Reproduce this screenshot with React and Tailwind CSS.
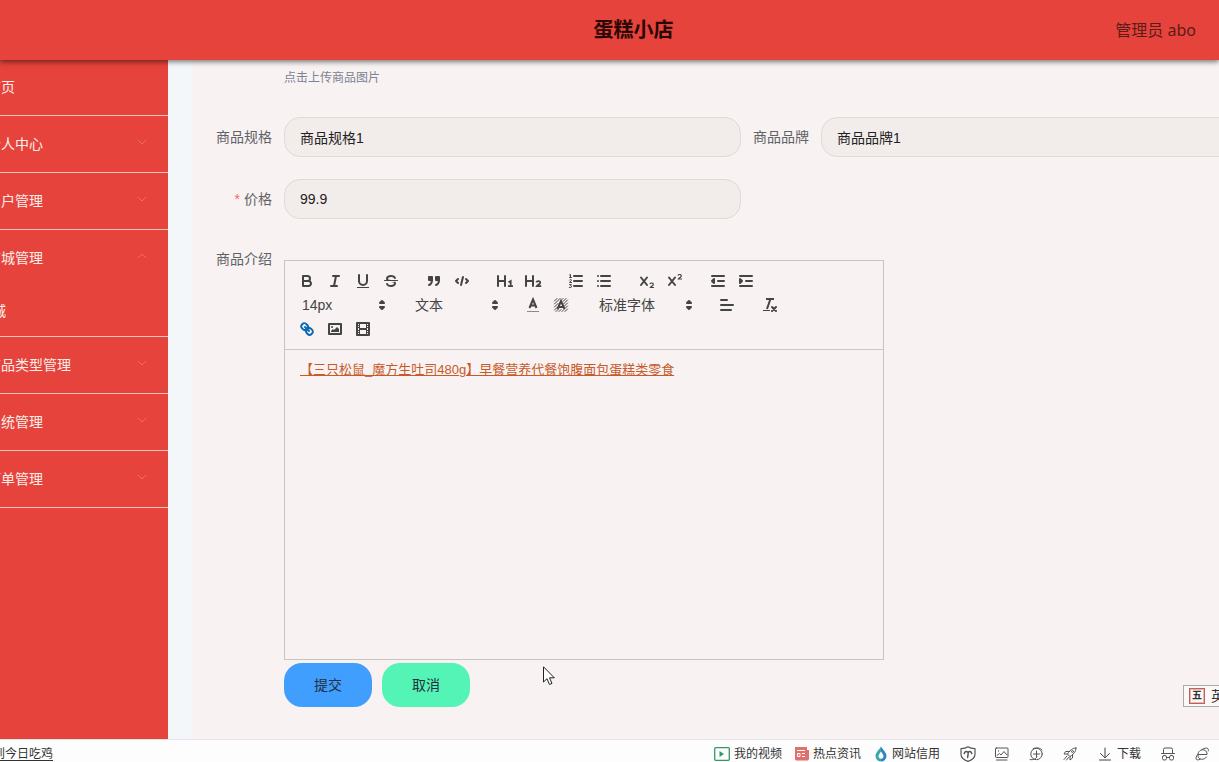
import React from "react";

const cjk = "font-['Liberation_Sans','Noto_Sans_CJK_SC',sans-serif]";

const L = (d) => (
  <path d={d} fill="none" stroke="#444" strokeWidth="2" strokeLinecap="round" strokeLinejoin="round" />
);

function ToolButton({ label, children }) {
  return (
    <button type="button" aria-label={label} className="flex h-6 w-7 items-center justify-center">
      <svg viewBox="0 0 18 18" className="size-[18px]">{children}</svg>
    </button>
  );
}

function Group({ children }) {
  return <span className="mr-[15px] flex">{children}</span>;
}

function Picker({ label, value, width }) {
  return (
    <Group>
      <span className={"relative flex h-6 items-center " + width}>
        <select aria-label={label} className="h-6 w-full appearance-none bg-transparent pl-[9px] text-sm leading-6 text-[#444] outline-none">
          <option>{value}</option>
        </select>
        <svg viewBox="0 0 18 18" className="pointer-events-none absolute right-0 size-[18px]">
          <polygon points="7 11 9 13 11 11 7 11" fill="#444" stroke="#444" strokeWidth="2" strokeLinejoin="round" />
          <polygon points="7 7 9 5 11 7 7 7" fill="#444" stroke="#444" strokeWidth="2" strokeLinejoin="round" />
        </svg>
      </span>
    </Group>
  );
}

function Toolbar() {
  return (
    <div className="flex flex-wrap border-b border-[#ccc8c8] p-2">
      <Group>
        <ToolButton label="粗体">
          {L("M5,4H9.5A2.5,2.5,0,0,1,12,6.5v0A2.5,2.5,0,0,1,9.5,9H5A0,0,0,0,1,5,9V4A0,0,0,0,1,5,4Z")}
          {L("M5,9h5.5A2.5,2.5,0,0,1,13,11.5v0A2.5,2.5,0,0,1,10.5,14H5a0,0,0,0,1,0,0V9A0,0,0,0,1,5,9Z")}
        </ToolButton>
        <ToolButton label="斜体">{L("M7,4H13M5,14H11M8,14L10,4")}</ToolButton>
        <ToolButton label="下划线">
          {L("M5,3V9a4,4,0,0,0,4,4H9a4,4,0,0,0,4-4V3")}
          <rect x="3" y="15" width="12" height="1" fill="#444" />
        </ToolButton>
        <ToolButton label="删除线">
          <path d="M15.5,8.5H2.5" stroke="#444" strokeLinecap="round" />
          <path fill="#444" d="M9.007,8C6.542,7.791,6,7.519,6,6.5,6,5.792,7.283,5,9,5c1.571,0,2.765.679,2.969,1.309a1,1,0,0,0,1.9-.617C13.356,4.106,11.354,3,9,3,6.2,3,4,4.538,4,6.5a3.2,3.2,0,0,0,.5,1.843Z" />
          <path fill="#444" d="M8.984,10C11.457,10.208,12,10.479,12,11.5c0,.708-1.283,1.5-3,1.5-1.571,0-2.765-.679-2.969-1.309a1,1,0,1,0-1.9.617C4.644,13.894,6.646,15,9,15c2.8,0,5-1.538,5-3.5a3.2,3.2,0,0,0-.5-1.843Z" />
        </ToolButton>
      </Group>
      <Group>
        <ToolButton label="引用">
          <g fill="#444" stroke="#444" strokeWidth="2" strokeLinejoin="round">
            <rect x="4" y="5" width="3" height="3" />
            <rect x="11" y="5" width="3" height="3" />
            <path d="M7,8c0,4.031-3,5-3,5" fill="none" strokeLinecap="round" />
            <path d="M14,8c0,4.031-3,5-3,5" fill="none" strokeLinecap="round" />
          </g>
        </ToolButton>
        <ToolButton label="代码">{L("M5,7L3,9L5,11M13,7L15,9L13,11M10,5L8,13")}</ToolButton>
      </Group>
      <Group>
        <ToolButton label="标题一">
          {L("M2,4V14M9,4V14M9,9H2")}
          <path d="M12,14.2H17M14.7,14.2V9L12.5,10.2" fill="none" stroke="#444" strokeWidth="1.8" />
        </ToolButton>
        <ToolButton label="标题二">
          {L("M2,4V14M9,4V14M9,9H2")}
          <path d="M12.3,10.3C13,8.6,16.6,8.8,16.2,10.9C16,12.3,13.6,13,12.8,14.2H17.2" fill="none" stroke="#444" strokeWidth="1.8" />
        </ToolButton>
      </Group>
      <Group>
        <ToolButton label="有序列表">
          {L("M7,4H15M7,9H15M7,14H15")}
          <path d="M2.5,5.5H4.5M3.5,5.5V2.5L2.5,3M2.5,8C3,7,4.7,7.4,4.4,8.4L2.5,10.5H4.6M2.5,12.6H4.4L3.5,13.8C5,13.8,4.8,15.6,3.5,15.5H2.4" fill="none" stroke="#444" strokeLinecap="round" />
        </ToolButton>
        <ToolButton label="无序列表">{L("M6,4H15M6,9H15M6,14H15M3,4H3M3,9H3M3,14H3")}</ToolButton>
      </Group>
      <Group>
        <ToolButton label="下标">
          {L("M3,5.500L9,13M9,5.500L3,13")}
          <path d="M12,12C12.400,10.500,15.700,10.700,15.200,12.600C15,13.700,13,14.400,12.400,15.500H16" fill="none" stroke="#444" strokeWidth="1.200" />
        </ToolButton>
        <ToolButton label="上标">
          {L("M3,5.500L9,13M9,5.500L3,13")}
          <path d="M12,3.500C12.400,2,15.700,2.200,15.200,4.100C15,5.200,13,5.900,12.400,7H16" fill="none" stroke="#444" strokeWidth="1.200" />
        </ToolButton>
      </Group>
      <Group>
        <ToolButton label="减少缩进">
          {L("M3,14H15M3,4H15M9,9H15")}
          <polygon points="5 7 5 11 3 9" fill="#444" stroke="#444" strokeWidth="2" strokeLinejoin="round" />
        </ToolButton>
        <ToolButton label="增加缩进">
          {L("M3,14H15M3,4H15M9,9H15")}
          <polygon points="3 7 3 11 5 9" fill="#444" stroke="#444" strokeWidth="2" strokeLinejoin="round" />
        </ToolButton>
      </Group>
      <Picker label="字号" value="14px" width="w-[98px]" />
      <Picker label="标题" value="文本" width="w-[98px]" />
      <Group>
        <ToolButton label="文字颜色">
          <path d="M3,15.5H15" stroke="#444" strokeOpacity=".6" />
          <path d="M5.5,12L9,3.500L12.5,12M11.6,9.500H6.4" fill="none" stroke="#444" strokeWidth="2" />
        </ToolButton>
        <ToolButton label="背景颜色">
          <path d="M2.5,5L5,2.5M2.5,8L8,2.5M2.5,11L6,7.5M2.5,14L5,11.5M4,15.5L6.5,13M7,15.5L9,13.5M10,15.5L12,13.5M13,15.5L15.5,13M13,12.5L15.5,10M12.5,10L15.5,7M11.5,8L15.5,4M11,5.5L14,2.5M10,3.5L11,2.5" stroke="#444" strokeLinecap="round" />
          <path d="M5.5,13L9,5L12.5,13M11.6,11H6.4" fill="none" stroke="#444" strokeWidth="2" />
        </ToolButton>
      </Group>
      <Picker label="字体" value="标准字体" width="w-[108px]" />
      <Group>
        <ToolButton label="对齐方式">{L("M3,9H15M3,14H13M3,4H9")}</ToolButton>
      </Group>
      <Group>
        <ToolButton label="清除格式">
          <path d="M5,3H13M6,13L9.4,3" stroke="#444" strokeWidth="2" fill="none" />
          <path d="M11,11L15,15M15,11L11,15" stroke="#444" strokeWidth="2" strokeLinecap="round" />
          <rect x="2" y="14" width="7" height="1" fill="#444" />
        </ToolButton>
      </Group>
      <Group>
        <ToolButton label="链接">
          <g fill="none" stroke="#0a68b4" strokeWidth="2" strokeLinecap="round" strokeLinejoin="round">
            <path d="M7,7L11,11" />
            <path d="M8.9,4.577a3.476,3.476,0,0,1,.36,4.679A3.476,3.476,0,0,1,4.577,8.9C3.185,7.5,2.035,6.4,4.217,4.217S7.5,3.185,8.9,4.577Z" />
            <path d="M13.423,9.1a3.476,3.476,0,0,0-4.679-.36,3.476,3.476,0,0,0,.36,4.679c1.392,1.392,2.5,2.542,4.679.36S14.815,10.5,13.423,9.1Z" />
          </g>
        </ToolButton>
        <ToolButton label="图片">
          <rect x="3" y="4" width="12" height="10" fill="none" stroke="#444" strokeWidth="2" strokeLinejoin="round" />
          <circle cx="6" cy="7" r="1" fill="#444" />
          <polyline points="5 12 5 11 7 9 8 10 11 7 13 9 13 12 5 12" fill="#444" />
        </ToolButton>
        <ToolButton label="视频">
          <rect x="3" y="3" width="12" height="12" fill="none" stroke="#444" strokeWidth="2" strokeLinejoin="round" />
          <path d="M5,3H6V15H5ZM12,3H13V15H12ZM5,8H13V10H5ZM3,5H6V6H3ZM3,7H6V8H3ZM3,10H6V11H3ZM3,12H6V13H3ZM12,5H15V6H12ZM12,7H15V8H12ZM12,10H15V11H12ZM12,12H15V13H12Z" fill="#444" />
        </ToolButton>
      </Group>
    </div>
  );
}

function Chevron({ up }) {
  return (
    <svg viewBox="0 0 12 12" className="mb-1 size-3" fill="none" stroke="#eb6f68">
      <path d={up ? "M2,8L6,4L10,8" : "M2,4L6,8L10,4"} />
    </svg>
  );
}

function NavItem({ text, open, sub }) {
  return (
    <li className="border-b border-[#f5c3bb]">
      <button type="button" className="flex h-14 w-full items-center justify-between pr-5 pl-[29px]">
        {text}
        <Chevron up={open} />
      </button>
      {sub && <a href="#mall" className="block h-[50px] pl-5 leading-[50px]">{sub}</a>}
    </li>
  );
}

function Sidebar() {
  return (
    <aside className="w-[168px] shrink-0 overflow-hidden bg-[#e5433b] text-sm text-[#fdeeea]">
      <ul className="-ml-[42px]">
        <li className="border-b border-[#f5c3bb]">
          <a href="#home" className="block h-[55px] pl-[29px] leading-[55px]">首页</a>
        </li>
        <NavItem text="个人中心" />
        <NavItem text="用户管理" />
        <NavItem text="商城管理" open sub="商城" />
        <NavItem text="商品类型管理" />
        <NavItem text="系统管理" />
        <NavItem text="订单管理" />
      </ul>
    </aside>
  );
}

function Field({ id, label, value, required }) {
  return (
    <div className="flex w-[537px] shrink-0">
      <label htmlFor={id} className="w-20 shrink-0 pr-3 text-right text-sm leading-10 text-[#606266]">
        {required && <span className="mr-1 text-[#f56c6c]">*</span>}
        {label}
      </label>
      <input id={id} defaultValue={value} className="h-10 min-w-0 flex-1 rounded-2xl border border-[#dfdadb] bg-[#f2eceb] px-[15px] text-sm text-[#222] outline-none" />
    </div>
  );
}

function FootIcon({ label, children }) {
  return (
    <button type="button" aria-label={label} className="shrink-0">
      <svg viewBox="0 0 16 16" className="size-4" fill="none" stroke="#555" strokeLinecap="round" strokeLinejoin="round">
        {children}
      </svg>
    </button>
  );
}

function StatusBar() {
  return (
    <footer className="flex h-[23px] shrink-0 items-center justify-between overflow-hidden border-t border-[#e4e4ea] bg-[#fdfdfd] pt-[5px] text-xs text-[#333]">
      <a href="#news" className="-ml-[7px] underline underline-offset-2">到今日吃鸡</a>
      <div className="flex items-center pr-[9px]">
        <a href="#video" className="mr-[13px] flex items-center gap-1">
          <svg viewBox="0 0 16 14" className="h-[14px] w-4" fill="none" stroke="#2f9a66">
            <rect x=".7" y=".7" width="14.6" height="12.6" rx="1" strokeWidth="1.3" />
            <path d="M5.5,4L10,7L5.5,10Z" fill="#2f9a66" stroke="none" />
          </svg>
          我的视频
        </a>
        <a href="#hot" className="mr-[13px] flex items-center gap-1">
          <svg viewBox="0 0 14 14" className="size-[14px]">
            <path d="M0,0H12V3H14V12L13,13.5H1L0,12.5Z" fill="#e0706b" />
            <path d="M2,3.5H10M2.5,6.5H5V9.5H2.5ZM7,6.5H10M7,9.5H10" stroke="#fff" fill="none" />
          </svg>
          热点资讯
        </a>
        <a href="#credit" className="mr-5 flex items-center gap-1">
          <svg viewBox="0 0 14 16" className="h-4 w-[14px]">
            <path d="M7,.5C5,4,1.5,6.5,1.5,10A5.5,5.5,0,0,0,7,15.5V12.7A2.6,2.6,0,0,1,4.6,9.8C5,8,6.500,6.500,7,5.500Z" fill="#35aaa6" />
            <path d="M7,.5C9,4,12.5,6.5,12.5,10A5.5,5.5,0,0,1,7,15.5V12.7A2.6,2.6,0,0,0,9.4,9.8C9,8,7.500,6.500,7,5.500Z" fill="#2f86c0" />
          </svg>
          网站信用
        </a>
        <div className="mr-5 flex gap-[18px]">
          <FootIcon label="安全">
            <path d="M8,.8C10,2.300,12.500,2.600,15,2.600V8C15,11.600,12,14,8,15.400C4,14,1,11.600,1,8V2.600C3.500,2.600,6,2.300,8,.8Z" strokeWidth="1.2" />
            <path d="M4.2,7.500C4.800,5,7.500,5,8,6.500C8.500,5,11.200,5,11.800,7.500M8.300,6.500L7.600,11.5" strokeWidth="1.5" />
          </FootIcon>
          <FootIcon label="截图">
            <rect x="1.5" y="2" width="12.500" height="9.500" rx=".8" />
            <path d="M3,9.500L5.5,7.500L7,9L10,5.5L13,9M4.500,4.8V5.2M2.500,14H13" />
          </FootIcon>
          <FootIcon label="加速">
            <circle cx="8.5" cy="8" r="5.7" />
            <path d="M8.5,5V11M5.5,8H11.5M2,13.5C5,14.500,8,12.500,9,11M5,2.7C8,1,13,2,14,4" />
          </FootIcon>
          <FootIcon label="火箭">
            <path d="M14,2C10.5,2,8,4,5.5,8L8,10.5C12,8,14,5.5,14,2ZM7.5,5.5L3.5,5.5L2,8L5.5,8M10.5,8.5V12L8,14V10.5M5,10L2,13.5M6.5,11.5L4.5,14" />
            <circle cx="10.5" cy="5.5" r="1" />
          </FootIcon>
        </div>
        <button type="button" className="mr-[19px] flex items-center gap-[5px]">
          <svg viewBox="0 0 14 14" className="size-[14px]" fill="none" stroke="#444" strokeLinecap="round">
            <path d="M7,1V10.5M2.5,6.5L7,10.8L11.5,6.5M1.5,13H12.5" />
          </svg>
          下载
        </button>
        <div className="flex gap-[18px]">
          <FootIcon label="无痕">
            <path d="M3.500,7V3.500Q3.500,2,5,2H11Q12.500,2,12.500,3.500V7M1.5,7.5H14.5M6.500,11.5H9.500" />
            <rect x="2.500" y="9.500" width="4" height="4.500" rx="1.500" />
            <rect x="9.500" y="9.500" width="4" height="4.500" rx="1.500" />
          </FootIcon>
          <FootIcon label="浏览器">
            <path d="M4.500,8.5H13C13.500,2.500,5,2,4,8C3,14.500,10.500,14.500,12.5,11M14.300,5C15.5,1,11,1.5,8,3.500M3.5,8.500C.8,12.5,1.5,15.300,6,13.300" />
          </FootIcon>
        </div>
      </div>
    </footer>
  );
}

export default function App() {
  return (
    <div className={"relative flex h-screen flex-col overflow-hidden " + cjk}>
      <header className="relative z-10 flex h-[60px] shrink-0 items-center bg-[#e5433b] px-[23px] shadow-[0_2px_5px_rgba(0,0,0,0.5)]">
        <span className="flex-1" />
        <h1 className="ml-12 text-xl font-bold text-[#2a0705]">蛋糕小店</h1>
        <span className="flex-1 text-right font-['Noto_Sans','Noto_Sans_CJK_SC',sans-serif] text-base text-[#5a1d1a]">管理员 abo</span>
      </header>
      <div className="flex min-h-0 flex-1">
        <Sidebar />
        <main className="min-w-0 flex-1 overflow-hidden bg-[#f4f7fa] pl-6">
          <form className="h-full bg-[#f8f2f2] pt-2 pl-3">
            <p className="mb-[29px] pl-20 text-xs leading-5 text-[#7c8293]">点击上传商品图片</p>
            <div className="mb-[22px] flex">
              <Field id="spec" label="商品规格" value="商品规格1" />
              <Field id="brand" label="商品品牌" value="商品品牌1" />
            </div>
            <Field id="price" label="价格" value="99.9" required />
            <div className="mt-5 flex">
              <span id="intro" className="w-20 shrink-0 pr-3 text-right text-sm leading-10 text-[#606266]">商品介绍</span>
              <div className="mt-[21px] flex h-[400px] w-[600px] flex-col border border-[#c9c4c4]">
                <Toolbar />
                <div role="textbox" aria-labelledby="intro" className="flex-1 px-[15px] py-[10px] text-[13px] leading-5">
                  <a href="#product" className="text-[#c75a2a] underline">【三只松鼠_魔方生吐司480g】早餐营养代餐饱腹面包蛋糕类零食</a>
                </div>
              </div>
            </div>
            <div className="mt-[3px] flex gap-[10px] pl-20 text-sm text-[#24303a]">
              <button type="button" className="h-11 w-[88px] rounded-[18px] bg-[#409eff]">提交</button>
              <button type="button" className="h-11 w-[88px] rounded-[18px] bg-[#54f4b7]">取消</button>
            </div>
          </form>
        </main>
      </div>
      <StatusBar />
      <div className="absolute top-[685px] right-0 flex h-[22px] w-9 items-center gap-1.5 overflow-hidden border border-r-0 border-[#aaa] bg-[#fbf8f8] pl-[5px] text-sm text-[#333]">
        <span className="flex size-4 shrink-0 items-center justify-center border border-[#c0605a] text-[10px] font-bold shadow-[inset_0_0_0_1px_#e8b5b0]">五</span>
        <span className="shrink-0">英</span>
      </div>
      <svg viewBox="0 0 12 20" className="absolute top-[666px] left-[543px] h-5 w-3" fill="#fff" stroke="#222">
        <path d="M.5,.8V16L4,12.7L6.5,18.5L9,17.4L6.5,11.8H11.3Z" />
      </svg>
    </div>
  );
}
